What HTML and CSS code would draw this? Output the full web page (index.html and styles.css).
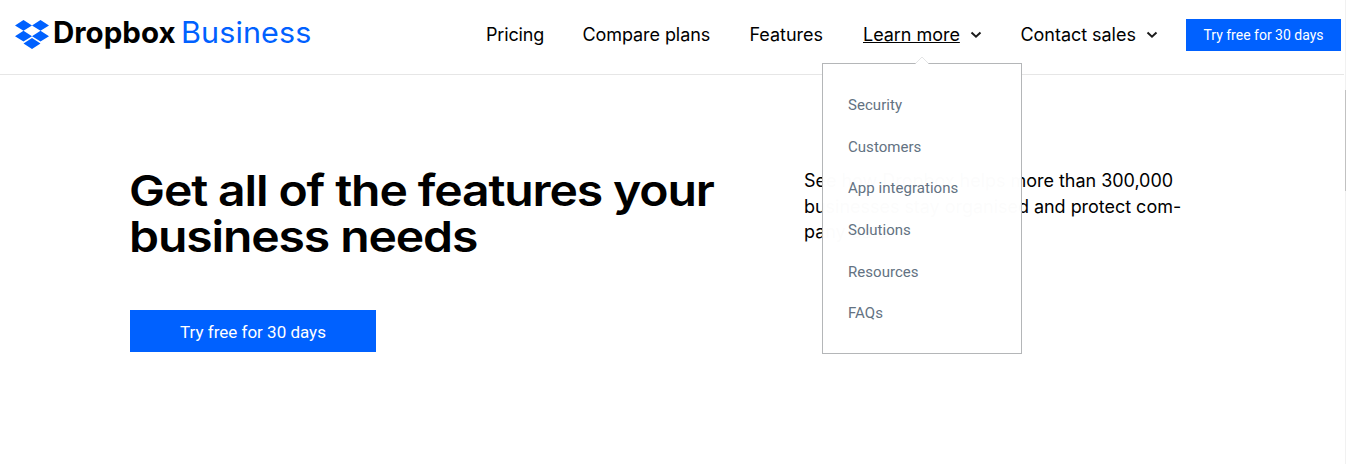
FILE: index.html
```html
<!DOCTYPE html>
<html lang="en">
<head>
<meta charset="utf-8">
<title>Dropbox Business</title>
<link rel="stylesheet" href="styles.css">
</head>
<body>
<header class="header">
  <a class="logo">
    <svg class="logo-mark" width="34" height="29" viewBox="0 0 34 29" fill="#0061ff"><path d="M8.5 0 17 5.4 8.5 10.8 0 5.4zM25.500 0 34 5.400 25.500 10.800 17 5.400zM8.500 10.800 17 16.200 8.500 21.600 0 16.200zM25.500 10.800 34 16.200 25.500 21.600 17 16.200zM17 18.100 25.500 23.500 17 28.900 8.500 23.500z"/></svg>
    <span class="logo-name">Dropbox</span>
    <span class="logo-product">Business</span>
  </a>
  <nav class="nav">
    <a class="nav-item pricing">Pricing</a>
    <a class="nav-item compare">Compare plans</a>
    <a class="nav-item features">Features</a>
    <div class="nav-item learn">
      <span class="current">Learn more</span>
      <svg class="chevron" width="12" height="8" viewBox="0 0 12 8"><path d="M1.500 1.500 6 5.700 10.500 1.500"/></svg>
      <div class="menu">
        <svg class="menu-tip" width="14" height="8" viewBox="0 0 14 8"><path d="M1 7 7 1 13 7V8H1z" fill="#fff"/><path d="M.5 7.500 7 1 13.500 7.500" fill="none" stroke="#e4e5e6"/></svg>
        <a>Security</a><a>Customers</a><a>App integrations</a><a>Solutions</a><a>Resources</a><a>FAQs</a>
      </div>
    </div>
    <div class="nav-item contact">
      <span>Contact sales</span>
      <svg class="chevron" width="12" height="8" viewBox="0 0 12 8"><path d="M1.500 1.500 6 5.700 10.500 1.500"/></svg>
    </div>
  </nav>
  <a class="button button-small">Try free for 30 days</a>
</header>
<main class="hero">
  <section class="pitch">
    <h1>Get all of the features your<br>business needs</h1>
    <a class="button button-large">Try free for 30 days</a>
  </section>
  <p class="summary">See how Dropbox helps more than 300,000<br>businesses stay organised and protect com-<br>pany data.</p>
</main>
<div class="scrollbar"><div class="thumb"></div></div>
</body>
</html>
```
FILE: styles.css
```css
* { box-sizing: border-box; }
body { margin: 0; height: 464px; overflow: hidden; background: #fff; color: #000; font-family: Inter, "Liberation Sans", sans-serif; }
.header { display: flex; width: 1344px; height: 75px; padding-left: 15px; border-bottom: 1px solid #e6e6e6; }
.logo { display: flex; width: 471px; height: 70px; line-height: 65px; }
.logo-mark { margin-top: 20px; margin-right: 4px; flex: none; }
.logo-name { width: 128px; font-size: 29.500px; font-weight: 700; }
.logo-product { font-size: 29.500px; letter-spacing: .100px; color: #0061ff; transform: scaleX(1.035); transform-origin: 0 0; }
.nav { display: flex; width: 700px; height: 70px; font-size: 18px; line-height: 70px; letter-spacing: -.040px; white-space: nowrap; }
.nav-item { display: flex; position: relative; flex: none; }
.pricing { width: 96.500px; letter-spacing: -.150px; }
.compare { width: 167px; letter-spacing: -.080px; }
.features { width: 113.500px; }
.learn { width: 157.500px; }
.current { text-decoration: underline; text-decoration-thickness: 1px; text-underline-offset: 1px; text-decoration-skip-ink: none; }
.chevron { margin: 31px 0 0 10px; fill: none; stroke: #1b1b1b; stroke-width: 2; }
.button { display: block; background: #0061ff; color: #fff; font-family: Roboto, sans-serif; text-align: center; }
.button-small { width: 155px; height: 32px; margin-top: 19px; font-size: 14px; line-height: 32px; }
.menu { position: absolute; left: -41px; top: 63px; width: 200px; height: 291px; padding: 21px 0 0 25px; border: 1px solid #b4b6b8; background: rgba(255, 255, 255, .99); color: #637282; font-family: Roboto, sans-serif; font-size: 15px; line-height: 41.650px; letter-spacing: .040px; z-index: 2; }
.menu a { display: block; }
.menu-tip { position: absolute; left: 92px; top: -8px; }
.hero { display: flex; padding: 92px 0 0 130px; }
.pitch { width: 674px; }
h1 { margin: 0 0 0 -1px; font-size: 43px; line-height: 46px; font-weight: 600; letter-spacing: -1px; white-space: nowrap; transform: scaleX(1.118); transform-origin: 0 0; }
.button-large { width: 246px; height: 42px; margin-top: 51px; font-size: 17px; line-height: 44px; }
.summary { margin: 1px 0 0; font-size: 18px; line-height: 25.500px; letter-spacing: -.030px; white-space: nowrap; }
.scrollbar { position: absolute; right: 0; top: 0; width: 1px; height: 464px; background: #f1f1f1; }
.thumb { height: 101px; margin-top: 90px; background: #c1c1c1; }
```
